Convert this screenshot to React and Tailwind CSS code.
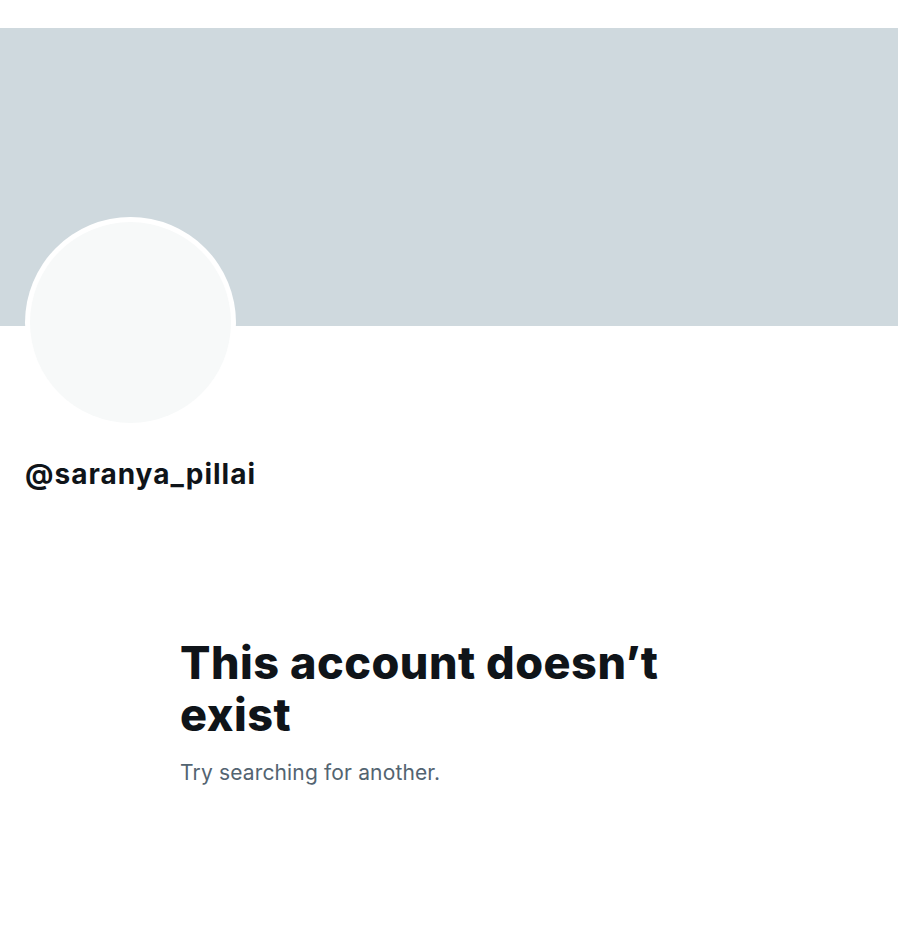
import React from 'react';

// Profile page for a handle that does not exist.

const FONT = { fontFamily: 'Inter, "Noto Sans", sans-serif' };

export default function App() {
  return (
    <div className="w-[898px] h-[947px] bg-white overflow-hidden" style={FONT}>
      {/* Top spacer */}
      <div className="h-[28px]" />

      {/* Banner */}
      <div className="h-[298px] bg-[#cfd9de]" />

      {/* Avatar */}
      <div className="px-[25px] -mt-[109px]">
        <div className="w-[211px] h-[211px] rounded-full bg-white p-[5px]">
          <div className="w-full h-full rounded-full bg-[#f7f9f9]" />
        </div>
      </div>

      {/* Handle */}
      <div className="px-[25px] mt-[29px]">
        <h2 className="text-[28px] leading-[34px] font-bold text-[#0f1419] tracking-[1px]">
          @saranya_pillai
        </h2>
      </div>

      {/* Empty state */}
      <div className="pl-[180px] mt-[146px]">
        <div className="w-[500px]">
          <h1 className="text-[45px] leading-[52px] font-extrabold text-[#0f1419] tracking-[0.5px]">
            This account doesn’t exist
          </h1>
          <p className="mt-[17px] text-[21px] leading-[29px] text-[#536471] tracking-[0.15px]">
            Try searching for another.
          </p>
        </div>
      </div>
    </div>
  );
}
